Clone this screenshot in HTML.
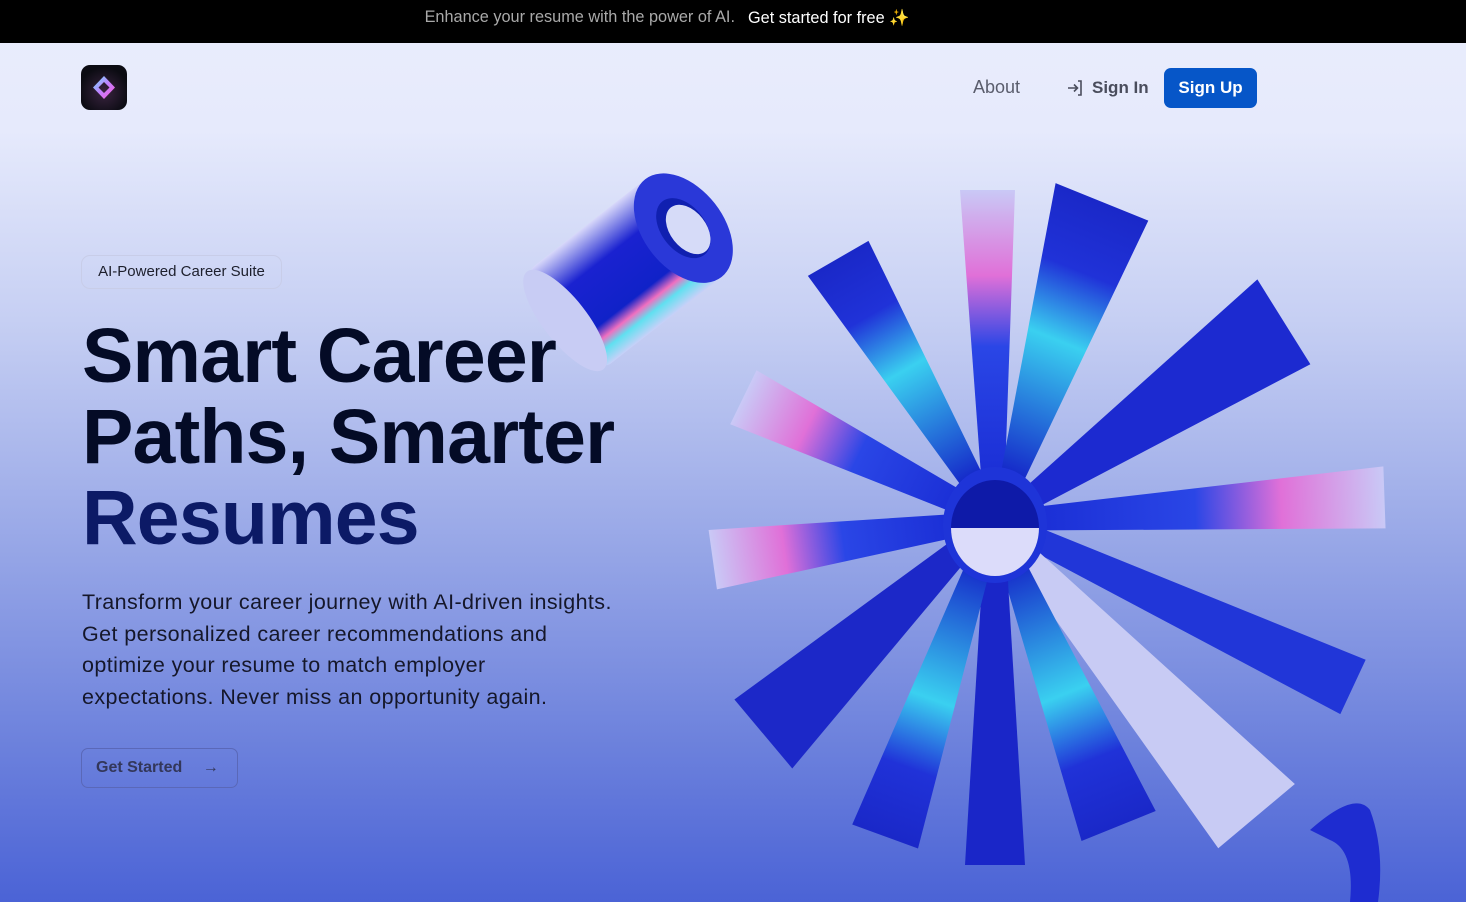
<!DOCTYPE html>
<html><head><meta charset="utf-8">
<style>
*{margin:0;padding:0;box-sizing:border-box}
body{width:1466px;height:902px;overflow:hidden;font-family:"Liberation Sans",sans-serif;background:linear-gradient(180deg,#eaedfd 0px,#e6eafc 130px,#c6cff3 320px,#94a4e6 560px,#6b80dc 750px,#4b63d6 902px);position:relative}
.top{height:43px;background:#000;color:#a9a9a9;font-size:16.3px;display:flex;justify-content:center;align-items:center;gap:13px;padding-bottom:8px;padding-right:132px}
.top b{color:#fff;font-weight:normal}
.logo{position:absolute;left:81px;top:65px;width:46px;height:45px;border-radius:9px;background:radial-gradient(circle at 50% 60%,#3a2440,#0b0b12 70%)}
.nav{position:absolute;top:68px;left:0;width:1466px}
.about{position:absolute;left:973px;top:9px;font-size:18px;color:#5a5d6c}
.signin{position:absolute;left:1066px;top:10px;font-size:17px;color:#4a4d5c;font-weight:bold;display:flex;align-items:center;gap:8px}
.signup{position:absolute;left:1164px;top:0;width:93px;height:40px;border-radius:7px;background:#0656c8;color:#fff;font-weight:bold;font-size:17px;text-align:center;line-height:40px}
.badge{position:absolute;left:81px;top:255px;width:201px;height:34px;border:1px solid #c8cde8;border-radius:9px;font-size:15px;color:#1d1f2c;line-height:32px;text-align:center}
h1{position:absolute;left:82px;top:316px;font-size:77px;line-height:81px;letter-spacing:-0.8px;color:#040b26;font-weight:bold}
h1 span{color:#0c1a66}
p{position:absolute;left:82px;top:587px;font-size:21.5px;line-height:31.7px;color:#15172a;width:540px;letter-spacing:0.4px}
.btn{position:absolute;left:81px;top:748px;width:157px;height:40px;border:1px solid #5a68b8;border-radius:7px;color:#33375a;font-weight:bold;font-size:16px;line-height:38px;padding-left:14px}
</style></head><body>
<div class="top"><span>Enhance your resume with the power of AI.</span><b>Get started for free <span style="color:#f5b13a">✨</span></b></div>
<div class="logo"><svg width="46" height="45" viewBox="0 0 46 45"><defs><linearGradient id="lg" x1="0" y1="0" x2="1" y2="1"><stop offset="0" stop-color="#6ee6ff"/><stop offset=".5" stop-color="#c080ff"/><stop offset="1" stop-color="#ff5ad8"/></linearGradient></defs><path d="M23 11 L34 22.5 L23 34 L12 22.5Z M23 17 L17.5 22.5 L23 28 L28.5 22.5Z" fill="url(#lg)" fill-rule="evenodd"/></svg></div>
<div class="nav">
<div class="about">About</div>
<div class="signin"><svg width="18" height="18" viewBox="0 0 18 18" fill="none" stroke="#4a4d5c" stroke-width="1.6"><path d="M2 9h9M8 5.5 11.5 9 8 12.5M12 2h3v14h-3"/></svg>Sign In</div>
<div class="signup">Sign Up</div>
</div>
<svg style="position:absolute;left:0;top:0" width="1466" height="902">
<defs>
<linearGradient id="pet" x1="0" y1="0" x2="1" y2="0"><stop offset="0" stop-color="#1b2fd6"/><stop offset=".45" stop-color="#2a46e6"/><stop offset=".7" stop-color="#e070d8"/><stop offset="1" stop-color="#c9c9f6"/></linearGradient>
<linearGradient id="pet2" x1="0" y1="0" x2="1" y2="0"><stop offset="0" stop-color="#1424c8"/><stop offset=".5" stop-color="#3ad0f0"/><stop offset=".75" stop-color="#2032d8"/><stop offset="1" stop-color="#1a28c8"/></linearGradient>
<linearGradient id="cyl" x1="0" y1="0" x2="0" y2="1"><stop offset="0" stop-color="#d8d8fa"/><stop offset=".3" stop-color="#1a22d0"/><stop offset=".7" stop-color="#1022c8"/><stop offset=".8" stop-color="#f070c0"/><stop offset=".88" stop-color="#60e0f0"/><stop offset="1" stop-color="#c8d0f8"/></linearGradient>
</defs>
<g transform="translate(640,262) rotate(-38)">
<rect x="-95" y="-62" width="150" height="124" rx="10" fill="url(#cyl)"/>
<ellipse cx="-95" cy="0" rx="22" ry="62" fill="#c8ccf4"/>
<ellipse cx="55" cy="0" rx="40" ry="62" fill="#2a38d8"/>
<ellipse cx="55" cy="0" rx="22" ry="34" fill="#1020b0"/>
<ellipse cx="58" cy="4" rx="18" ry="28" fill="#d6dbf8"/>
</g>
<g transform="translate(995,520)">
<g transform="rotate(-90)"><polygon points="45,-14 330,-35 330,20 45,10" fill="url(#pet)"/></g>
<g transform="rotate(-68)"><polygon points="45,-12 335,-70 335,30 45,12" fill="url(#pet2)"/></g>
<g transform="rotate(-32)"><polygon points="45,-12 350,-65 350,35 45,12" fill="#1c2ad0"/></g>
<g transform="rotate(-2)"><polygon points="45,-12 390,-40 390,22 45,12" fill="url(#pet)"/></g>
<g transform="rotate(25)"><polygon points="45,-12 395,-30 395,30 45,12" fill="#2136d8"/></g>
<g transform="rotate(50)"><polygon points="45,-12 395,-60 395,40 45,12" fill="#c8cbf4"/></g>
<g transform="rotate(68)"><polygon points="45,-12 330,-40 330,40 45,12" fill="url(#pet2)"/></g>
<g transform="rotate(90)"><polygon points="45,-12 345,-30 345,30 45,12" fill="#1a26c8"/></g>
<g transform="rotate(110)"><polygon points="45,-12 335,-40 335,30 45,12" fill="url(#pet2)"/></g>
<g transform="rotate(140)"><polygon points="45,-12 315,-60 315,30 45,12" fill="#1c28c8"/></g>
<g transform="rotate(172)"><polygon points="45,-12 285,-30 285,30 45,12" fill="url(#pet)"/></g>
<g transform="rotate(-154)"><polygon points="45,-12 280,-30 280,30 45,12" fill="url(#pet)"/></g>
<g transform="rotate(-120)"><polygon points="45,-12 305,-40 305,30 45,12" fill="url(#pet2)"/></g>
<ellipse cx="0" cy="5" rx="52" ry="58" fill="#1e34d8"/>
<ellipse cx="0" cy="8" rx="44" ry="48" fill="#0e1aa8"/>
<path d="M-44 8 A44 48 0 0 0 44 8Z" fill="#dcdcfa"/>
</g>
<path d="M1310 830 Q1355 790 1370 810 Q1385 850 1378 902 L1350 902 Q1355 850 1330 840Z" fill="#1e2cd0"/>
</svg>
<div class="badge">AI-Powered Career Suite</div>
<h1>Smart Career<br>Paths, Smarter<br><span>Resumes</span></h1>
<p>Transform your career journey with AI-driven insights. Get personalized career recommendations and optimize your resume to match employer expectations. Never miss an opportunity again.</p>
<div class="btn">Get Started <span style="margin-left:16px">→</span></div>
</body></html>
